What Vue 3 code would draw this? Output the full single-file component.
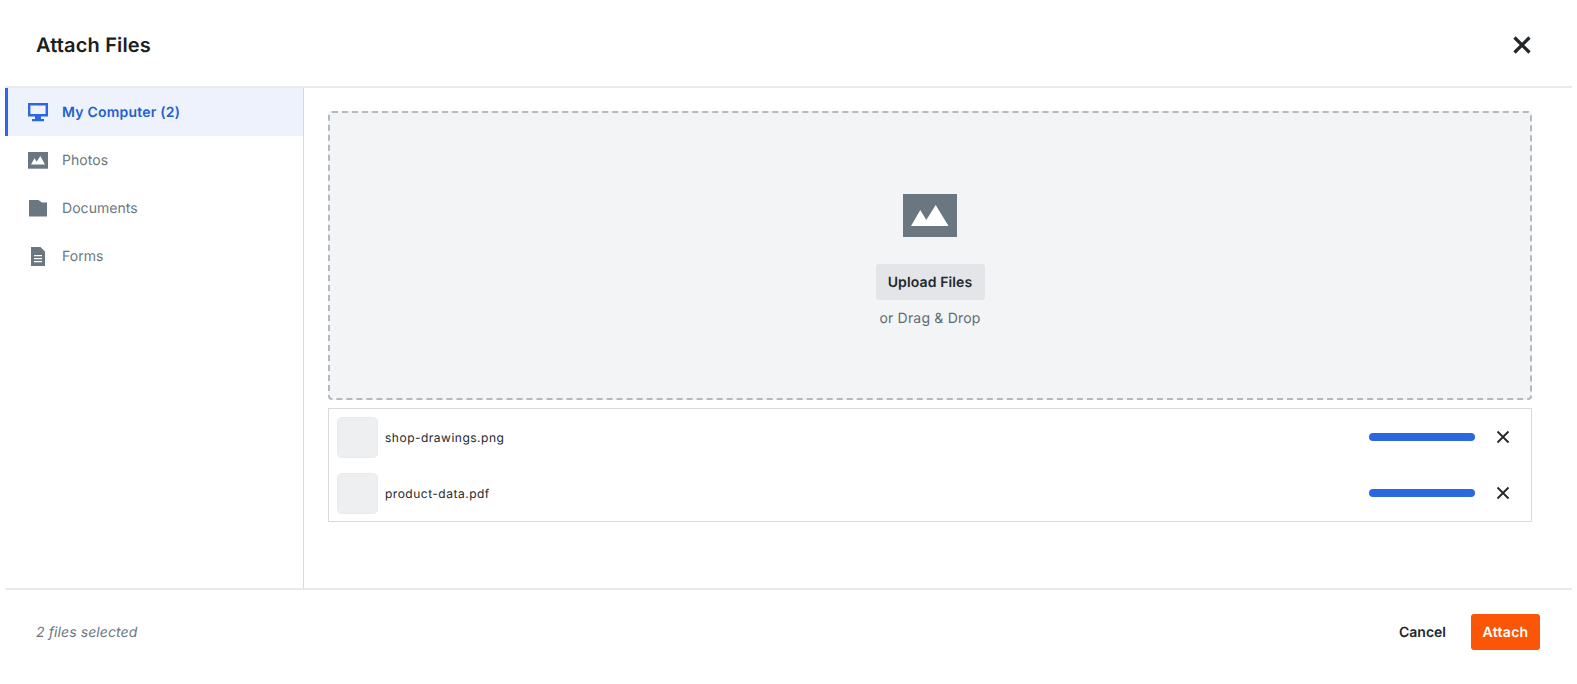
<script setup>
const items = [
  { label: 'My Computer (2)', icon: 'monitor', active: true },
  { label: 'Photos', icon: 'photo' },
  { label: 'Documents', icon: 'folder' },
  { label: 'Forms', icon: 'doc' },
]
const files = ['shop-drawings.png', 'product-data.pdf']
</script>

<template>
  <div class="modal">
    <header class="head">
      <h1>Attach Files</h1>
      <svg class="close" width="20" height="20" viewBox="0 0 20 20"><path d="M2.500 2.500 17.500 17.500M17.500 2.500 2.500 17.500" stroke="#22272b" stroke-width="3.200" fill="none"/></svg>
    </header>
    <div class="body">
      <nav class="side">
        <div v-for="it in items" :key="it.label" class="item" :class="{ active: it.active }">
          <span class="ico">
            <svg v-if="it.icon === 'monitor'" width="20" height="19" viewBox="0 0 20 19"><path fill="#2b67e0" fill-rule="evenodd" d="M0 0h20v13.500H13v2.500h3v2.300H4V16h3v-2.500H0zM2.400 2.400v8.700h15.200V2.400z"/></svg>
            <svg v-else-if="it.icon === 'photo'" width="20" height="17" viewBox="0 0 20 17"><path fill="#6b7780" d="M0 0h20v16.700H0z"/><path fill="#fff" d="M3 12.500 6.500 6.200 8.700 9.800 12.300 4.100 17 12.500z"/></svg>
            <svg v-else-if="it.icon === 'folder'" width="18" height="17" viewBox="0 0 18 17"><path fill="#6b7780" d="M0 0h9.500l3.500 2.500h5V16.500H0z"/></svg>
            <svg v-else width="14" height="19" viewBox="0 0 14 19"><path fill="#6b7780" fill-rule="evenodd" d="M0 0h9.500L14 4.500V19H0zM3 8v1.300h8V8zM3 11v1.300h8V11zM3 14v1.300h8V14z"/></svg>
          </span>
          <span>{{ it.label }}</span>
        </div>
      </nav>
      <main class="main">
        <div class="drop">
          <svg class="big" width="54" height="43" viewBox="0 0 54 43"><path fill="#6b7780" d="M0 0h54v43H0z"/><path fill="#fff" d="M8 32 17.300 16 23.300 26 32.700 11 45.500 32z"/></svg>
          <button class="upload">Upload Files</button>
          <div class="dd">or Drag &amp; Drop</div>
        </div>
        <div class="list">
          <div v-for="f in files" :key="f" class="file">
            <span class="thumb"></span>
            <span class="name">{{ f }}</span>
            <span class="bar"></span>
            <svg class="x" width="14" height="14" viewBox="0 0 14 14"><path d="M1.500 1.500 12.500 12.500M12.500 1.500 1.500 12.500" stroke="#22272b" stroke-width="1.800" fill="none"/></svg>
          </div>
        </div>
      </main>
    </div>
    <footer class="foot">
      <em>2 files selected</em>
      <div class="acts">
        <button class="cancel">Cancel</button>
        <button class="attach">Attach</button>
      </div>
    </footer>
  </div>
</template>

<style>
html, body { margin: 0; background: #fff; }
</style>

<style scoped>
.modal {
  box-sizing: border-box;
  margin-left: 5px;
  width: 1567px;
  height: 684px;
  display: flex;
  flex-direction: column;
  font-family: Inter, "Liberation Sans", sans-serif;
  text-rendering: geometricPrecision;
  color: #22272b;
  background: #fff;
}
.head {
  height: 88px;
  box-sizing: border-box;
  flex: none;
  display: flex;
  align-items: center;
  justify-content: space-between;
  padding: 4px 40px 0 31px;
  border-bottom: 2px solid #e8eaeb;
}
h1 { margin: 0; font-size: 20px; font-weight: 600; color: #1b1f22; letter-spacing: 0.15px; }
.close { display: block; }
.body { flex: none; height: 500.300px; display: flex; }
.side {
  width: 299px;
  flex: none;
  box-sizing: border-box;
  border-right: 1px solid #d8dbdd;
}
.item {
  height: 48px;
  display: flex;
  align-items: center;
  box-sizing: border-box;
  padding-left: 23px;
  font-size: 14px;
  color: #6b7780;
  letter-spacing: 0.05px;
}
.item.active {
  background: #edf2fc;
  border-left: 3px solid #2b67e0;
  padding-left: 20px;
  color: #1f5fd1;
  font-weight: 600;
  letter-spacing: 0.22px;
}
.ico { width: 20px; height: 20px; margin-right: 14px; display: flex; align-items: center; justify-content: center; }
.ico svg { display: block; flex: none; }
.main { flex: 1; padding: 23.300px 40px 0 24px; min-width: 0; }
.drop {
  box-sizing: border-box;
  height: 289px;
  background: #f3f4f6;
  border: 2px dashed #b3b9bd;
  border-radius: 4px;
  display: flex;
  flex-direction: column;
  align-items: center;
  padding-top: 80.700px;
}
.big { display: block; flex: none; }
.upload {
  margin-top: 27px;
  width: 109px;
  height: 36px;
  flex: none;
  border: 0;
  border-radius: 3px;
  background: #e3e5e8;
  color: #22272b;
  font: 600 14px Inter, sans-serif;
  text-rendering: geometricPrecision;
  letter-spacing: 0.12px;
  padding: 1px 0 0;
}
.dd { margin-top: 9px; font-size: 14px; line-height: 20px; color: #5f6b74; letter-spacing: 0.2px; }
.list {
  box-sizing: border-box;
  margin-top: 8px;
  height: 114px;
  border: 1px solid #d8dbdd;
  padding: 8px 0 0 8px;
}
.file { height: 55.300px; display: flex; align-items: flex-start; }
.thumb { box-sizing: border-box; width: 41px; height: 41px; border-radius: 5px; background: #eeeff1; border: 1px solid #e9eaec; flex: none; }
.name { margin-left: 7px; font-size: 12px; line-height: 41px; color: #22272b; letter-spacing: 0.5px; flex: 1; }
.bar { width: 106px; height: 8px; margin-top: 16px; border-radius: 4px; background: #2b67e0; flex: none; }
.x { margin: 13px 21px 0 21px; flex: none; }
.foot {
  flex: 1;
  border-top: 2px solid #e8eaeb;
  display: flex;
  align-items: center;
  justify-content: space-between;
  padding: 0 32px 11px 31px;
}
em { font-size: 14px; line-height: 20px; padding-top: 3px; color: #6b7780; letter-spacing: 0.1px; }
.acts { display: flex; align-items: center; }
button { cursor: pointer; }
.cancel { border: 0; background: none; padding: 1px 0 0; margin-right: 25px; font: 600 14px Inter, sans-serif; text-rendering: geometricPrecision; color: #22272b; }
.attach { width: 69px; height: 36px; border: 0; border-radius: 3px; background: #fb5607; color: #fff; font: 600 14px Inter, sans-serif; text-rendering: geometricPrecision; letter-spacing: 0.3px; padding: 1px 0 0; }
</style>
